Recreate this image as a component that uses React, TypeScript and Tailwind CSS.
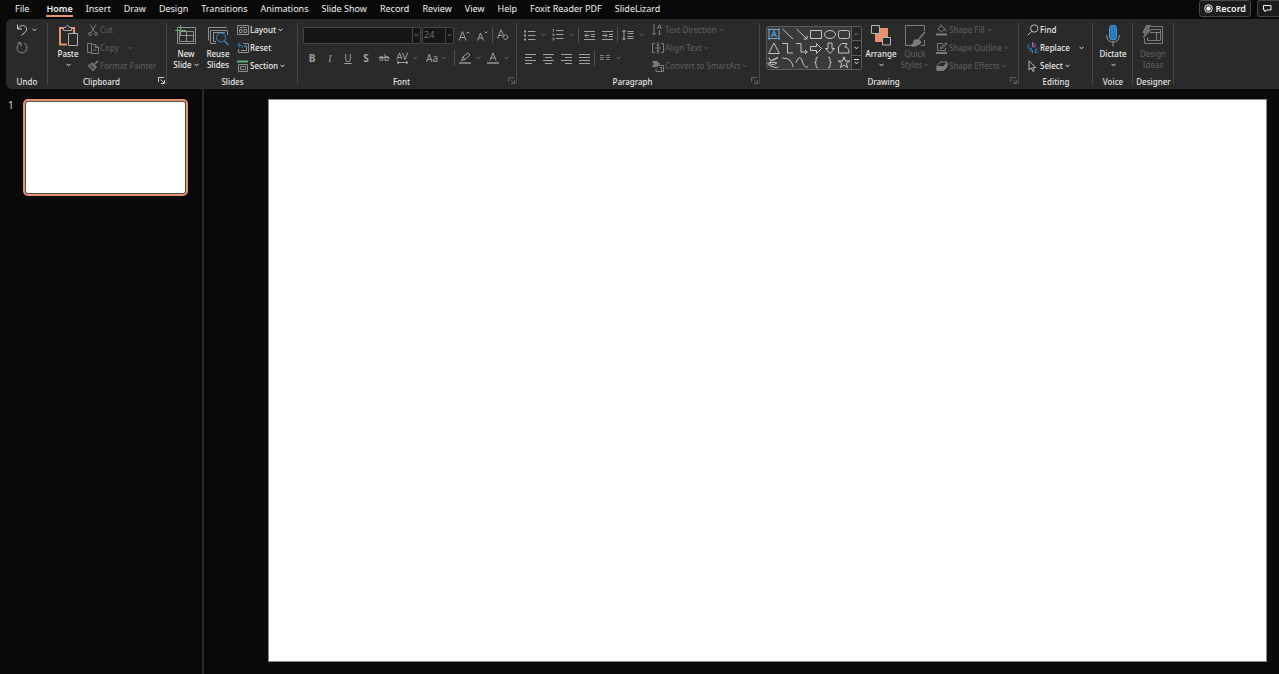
import React, { useState } from 'react';

interface IconProps {
  w?: number;
  h?: number;
  className?: string;
  children: React.ReactNode;
}

const Icon: React.FC<IconProps> = ({ w = 12, h = 12, className = '', children }) => (
  <svg
    width={w}
    height={h}
    viewBox={`0 0 ${w} ${h}`}
    fill="none"
    stroke="currentColor"
    className={`shrink-0 ${className}`}
    aria-hidden="true"
  >
    {children}
  </svg>
);

const Chevron = () => (
  <Icon w={5} h={4}>
    <path d="M0.5 0.8 2.5 2.8 4.5 0.8" />
  </Icon>
);

const Divider = () => <span className="w-px h-4 mx-px shrink-0 bg-[#505050]" />;

const Launcher: React.FC<{ label: string; disabled?: boolean }> = ({ label, disabled }) => (
  <button
    aria-label={`${label} settings`}
    className={`absolute right-0.5 bottom-1 ${disabled ? 'text-[#606060]' : 'text-[#c8c8c8]'}`}
  >
    <Icon w={7} h={7}>
      <path d="M0.5 5V0.5H6M2.5 2.5 6 6M6.5 3V6.5H3" />
    </Icon>
  </button>
);

interface GroupProps {
  label: string;
  width: string;
  launcher?: 'on' | 'off';
  children: React.ReactNode;
}

const Group: React.FC<GroupProps> = ({ label, width, launcher, children }) => (
  <section aria-label={label} className={`relative shrink-0 pt-0.5 ${width}`}>
    <div className="flex h-[54px]">{children}</div>
    <div
      className={`h-[13px] leading-[13px] text-center font-medium text-[#e4e4e4] ${launcher ? 'pr-3' : ''}`}
    >
      {label}
    </div>
    {launcher && <Launcher label={label} disabled={launcher === 'off'} />}
    <span className="absolute right-0 top-1 bottom-1 w-px bg-[#484848]" />
  </section>
);

interface BigButtonProps {
  icon: React.ReactNode;
  lines: string[];
  disabled?: boolean;
  menu?: boolean;
}

const BigButton: React.FC<BigButtonProps> = ({ icon, lines, disabled, menu }) => (
  <button
    className={`flex flex-col items-center shrink-0 w-8 pt-1 leading-[11px] whitespace-nowrap ${
      disabled ? 'text-[#606060]' : 'font-medium text-[#ececec]'
    }`}
  >
    <span className="h-[23px]">{icon}</span>
    <span>{lines[0]}</span>
    <span className="flex items-center justify-center gap-0.5 h-[11px]">
      {lines[1]}
      {menu && <Chevron />}
    </span>
  </button>
);

interface RowButtonProps {
  icon: React.ReactNode;
  label: string;
  disabled?: boolean;
  menu?: boolean;
  wide?: boolean;
}

const RowButton: React.FC<RowButtonProps> = ({ icon, label, disabled, menu, wide }) => (
  <button
    className={`flex items-center h-[18px] gap-px whitespace-nowrap ${
      disabled ? 'text-[#606060]' : 'font-medium text-[#ececec]'
    }`}
  >
    <span className={disabled ? 'text-[#7c7c7c]' : 'text-[#b8b8b8]'}>{icon}</span>
    <span>{label}</span>
    {menu && (
      <span className={wide ? 'pl-2' : 'pl-px'}>
        <Chevron />
      </span>
    )}
  </button>
);

const ToolButton: React.FC<{ label: string; menu?: boolean; children: React.ReactNode }> = ({
  label,
  menu,
  children,
}) => (
  <button
    aria-label={label}
    className={`flex items-center h-[22px] shrink-0 text-[#a0a0a0] ${menu ? 'w-7' : 'w-[18px]'}`}
  >
    <span className="flex justify-center w-[18px]">{children}</span>
    {menu && (
      <span className="flex justify-center w-2 text-[#6c6c6c]">
        <Chevron />
      </span>
    )}
  </button>
);

const lineIcon = (rows: number[][]) => (
  <Icon w={11} h={11}>
    {rows.map(([x1, x2], i) => (
      <path key={i} d={`M${x1} ${1.5 + i * 3}H${x2}`} />
    ))}
  </Icon>
);

const tabs = [
  'File',
  'Home',
  'Insert',
  'Draw',
  'Design',
  'Transitions',
  'Animations',
  'Slide Show',
  'Record',
  'Review',
  'View',
  'Help',
  'Foxit Reader PDF',
  'SlideLizard',
];

const shapes: { name: string; art: React.ReactNode }[] = [
  {
    name: 'Text box',
    art: (
      <>
        <path d="M2 2.5H12V11.5H2Z" stroke="#9aa4ac" />
        <path d="M4.5 10 7 4 9.5 10M5.5 8H8.5" stroke="#3d9be0" strokeWidth="1.3" />
        <path d="M1 2.5H3M11 2.5H13M1 11.5H3M11 11.5H13" stroke="#3d9be0" strokeWidth="2" />
      </>
    ),
  },
  { name: 'Line', art: <path d="M1.5 2 12 12" /> },
  { name: 'Arrow', art: <path d="M1.5 2 12 12M12 8.5V12H8.5" /> },
  { name: 'Rectangle', art: <path d="M1.5 3.5H12.5V11.5H1.5Z" /> },
  { name: 'Oval', art: <ellipse cx="7" cy="7.5" rx="5.5" ry="4" /> },
  { name: 'Rounded rectangle', art: <rect x="1.5" y="3.5" width="11" height="8" rx="2" /> },
  { name: 'Triangle', art: <path d="M7 2 12.3 12.5H1.7Z" /> },
  { name: 'Elbow connector', art: <path d="M1 2.5H6.5V12H12" /> },
  { name: 'Elbow arrow connector', art: <path d="M1 2.5H6V11H12M10 9 12.3 11 10 13" /> },
  { name: 'Right arrow', art: <path d="M1.5 5.5H7.5V2.5L12.5 7.5 7.5 12.5V9.5H1.5Z" /> },
  { name: 'Down arrow', art: <path d="M5 2V7.5H2.5L7 12.5 11.5 7.5H9V2Z" /> },
  { name: 'Freeform', art: <path d="M1.5 6 4.5 2.5H10L8 6Q12 6 12 12H1.5Z" /> },
  { name: 'Scribble', art: <path d="M2 2.5Q2 6 5 5.5T11 2.5Q3 5 3 8T8 9 5 7.5 4 11 11.5 11.5" /> },
  { name: 'Arc', art: <path d="M1.5 3Q11 3 12 12" /> },
  { name: 'Curve', art: <path d="M1 7.5C4 0 6 2 7.5 7S10 12 13 12" /> },
  { name: 'Left brace', art: <path d="M9 2Q7 2 7 4V6Q7 7.5 5.5 7.5 7 7.5 7 9V11Q7 13 9 13" /> },
  { name: 'Right brace', art: <path d="M5 2Q7 2 7 4V6Q7 7.5 8.5 7.5 7 7.5 7 9V11Q7 13 5 13" /> },
  { name: 'Star', art: <path d="M7 1.8 8.4 6H12.7L9.3 8.4 10.6 12.6 7 10 3.4 12.6 4.7 8.4 1.3 6H5.6Z" /> },
];

const TopBar = () => {
  const [active, setActive] = useState('Home');

  return (
    <header className="flex items-start justify-between h-[19px] text-[9px] leading-4 text-[#f0f0f0]">
      <nav className="flex gap-[13px] pl-[15px] whitespace-nowrap">
        {tabs.map((tab) => (
          <button
            key={tab}
            onClick={() => setActive(tab)}
            className={`h-[17px] border-b-2 leading-[17px] first:mr-1 ${
              tab === active ? 'border-[#e8926c] font-semibold' : 'border-transparent'
            }`}
          >
            {tab}
          </button>
        ))}
      </nav>
      <div className="flex gap-1.5">
        <button className="flex items-center gap-[3px] h-[17px] px-1 rounded-[3px] border border-[#484848] bg-[#1c1c1c] font-semibold">
          <Icon w={9} h={9}>
            <circle cx="4.5" cy="4.5" r="3.8" />
            <circle cx="4.5" cy="4.5" r="2.3" fill="currentColor" stroke="none" />
          </Icon>
          Record
        </button>
        <button
          aria-label="Comments"
          className="flex items-center h-[17px] w-[22px] pl-1 rounded-l-[3px] border border-r-0 border-[#484848] bg-[#1c1c1c]"
        >
          <Icon w={10} h={9}>
            <path d="M1.5 1.5H9V6H4.5L3 7.8V6H1.5Z" />
          </Icon>
        </button>
      </div>
    </header>
  );
};

const UndoGroup = () => (
  <Group label="Undo" width="w-[42px]">
    <div className="flex flex-col pl-2.5">
      <button aria-label="Undo" className="flex items-center gap-1 h-[18px] text-[#d0d0d0]">
        <Icon>
          <path d="M1.5 0.5V5H6M1.8 4.7C4 1.5 7 0.7 9.2 2.5 11.5 4.5 10.5 7 9 8.2L5.5 11.5" />
        </Icon>
        <Chevron />
      </button>
      <button aria-label="Redo" className="flex items-center h-[18px] text-[#8a8a8a]">
        <Icon>
          <path d="M1.5 .8H5V4.3M4.8 1A5 5 0 1 0 8 1.3" />
        </Icon>
      </button>
    </div>
  </Group>
);

const ClipboardGroup = () => (
  <Group label="Clipboard" width="w-[119px]" launcher="on">
    <div className="flex gap-[3px] pl-1">
      <BigButton
        menu
        lines={['Paste', '']}
        icon={
          <Icon w={20} h={22}>
            <path d="M7 3H2V19.5H9" stroke="#e8926c" strokeWidth="2" />
            <path d="M13 3H16V8" stroke="#e8926c" strokeWidth="2" />
            <path d="M5.5 5.5V2.5H7.5Q8 .5 9.5 .5T11.5 2.5H13.5V5.5Z" stroke="#a8a8a8" fill="#2a2a2a" />
            <path d="M10.5 8.5H19.5V20.5H10.5Z" stroke="#b0b0b0" fill="#2a2a2a" />
          </Icon>
        }
      />
      <div className="flex flex-col">
        <RowButton
          disabled
          label="Cut"
          icon={
            <Icon>
              <path d="M3 .5 8 8.5M9 .5 4 8.5" />
              <circle cx="3" cy="9.8" r="1.5" />
              <circle cx="9" cy="9.8" r="1.5" />
            </Icon>
          }
        />
        <RowButton
          disabled
          menu
          wide
          label="Copy"
          icon={
            <Icon>
              <path d="M4 10.5H.5V1.5H5" />
              <path d="M4.5 2.5H8.5L11.5 5.5V11.5H4.5ZM8.5 2.5V5.5H11.5M6.5 8H9.5" />
            </Icon>
          }
        />
        <RowButton
          disabled
          label="Format Painter"
          icon={
            <Icon>
              <path d="M11 .8 8 4M5 3 9.5 7.5" strokeWidth="1.6" />
              <path d="M4.5 3.5 1 5.5 6 11 9 7.8Z" fill="currentColor" fillOpacity=".5" />
            </Icon>
          }
        />
      </div>
    </div>
  </Group>
);

const SlidesGroup = () => (
  <Group label="Slides" width="w-[131px]">
    <div className="flex pl-[3px]">
      <BigButton
        menu
        lines={['New', 'Slide']}
        icon={
          <Icon w={22} h={22} className="text-[#909090]">
            <path d="M2.5 2.5H20.5V18.5H2.5Z" />
            <path d="M4.5 6.5H18.5V16.5H4.5ZM11.5 6.5V16.5M4.5 10.5H18.5" />
            <path d="M5.5 0V11M0 5.5H11" stroke="#5fb070" />
          </Icon>
        }
      />
      <BigButton
        lines={['Reuse', 'Slides']}
        icon={
          <Icon w={22} h={22} className="text-[#909090]">
            <path d="M1.5 15.5V2.5H19.5M9 18.5H3.5V5.5H20.5V10M6 7.5H18M6.5 7.5V16.5H9" />
            <circle cx="14" cy="12.5" r="4.5" stroke="#2f86c8" />
            <path d="M17.3 15.8 21.5 20" stroke="#2f86c8" strokeWidth="1.4" />
          </Icon>
        }
      />
      <div className="flex flex-col pl-[3px]">
        <RowButton
          menu
          label="Layout"
          icon={
            <Icon className="text-[#909090]">
              <path d="M.5 1.5H11.5V10.5H.5ZM2.5 3.5H9.5M2.5 5.5H5V8.5H2.5ZM7 5.5H9.5V8.5H7Z" />
            </Icon>
          }
        />
        <RowButton
          label="Reset"
          icon={
            <Icon className="text-[#909090]">
              <path d="M6 1.5H11.5V10.5H1.5V7M7 4H9.5V8.5H4" />
              <path d="M3 .8 .8 3 3 5.2M1 3H3Q5.5 3 5.5 6" stroke="#2f86c8" />
            </Icon>
          }
        />
        <RowButton
          menu
          label="Section"
          icon={
            <Icon className="text-[#909090]">
              <path d="M0 1.5H11" stroke="#5fb070" strokeWidth="2" />
              <path d="M1.5 4.5H10.5V11.5H1.5ZM3.5 6.5H8.5V9.5H3.5Z" />
            </Icon>
          }
        />
      </div>
    </div>
  </Group>
);

const FontGroup = () => (
  <Group label="Font" width="w-[219px]" launcher="off">
    <div className="flex flex-col gap-px pt-[3px] pl-[5px]">
      <div className="flex items-center h-[22px] gap-px">
        <div className="flex h-[17px] w-[118px] rounded-[2px] border border-[#454545] bg-[#161616]">
          <input aria-label="Font name" className="min-w-0 flex-1 bg-transparent px-1 text-[#707070]" />
          <button aria-label="Font list" className="flex items-center justify-center w-2 border-l border-[#454545] text-[#707070]">
            <Chevron />
          </button>
        </div>
        <div className="flex h-[17px] w-8 rounded-[2px] border border-[#454545] bg-[#161616]">
          <input
            aria-label="Font size"
            defaultValue="24"
            className="min-w-0 flex-1 bg-transparent pl-px text-[9px] text-[#707070]"
          />
          <button aria-label="Font size list" className="flex items-center justify-center w-2 border-l border-[#454545] text-[#707070]">
            <Chevron />
          </button>
        </div>
        <div className="flex items-center">
          <ToolButton label="Increase font size">
            <Icon w={12} h={11}>
              <path d="M1 10.5 4.5 1.5 8 10.5M2.2 7.5H6.8M8.5 3.5 10 2 11.5 3.5" />
            </Icon>
          </ToolButton>
          <ToolButton label="Decrease font size">
            <Icon w={12} h={11}>
              <path d="M1.5 10.5 4.5 3 7.5 10.5M2.5 8H6.5M8.5 1.5 10 3 11.5 1.5" />
            </Icon>
          </ToolButton>
          <Divider />
          <ToolButton label="Clear formatting">
            <Icon w={12} h={12}>
              <path d="M.5 9.5 4 .8 6.5 6.5M1.8 6.5H5.5M8.5 5.5 11.3 8 8.5 11 5.8 8.3Z" />
            </Icon>
          </ToolButton>
        </div>
      </div>
      <div className="flex items-center h-[22px] text-[10px]">
        <ToolButton label="Bold"><b>B</b></ToolButton>
        <ToolButton label="Italic"><i className="font-['Liberation_Serif',serif]">I</i></ToolButton>
        <ToolButton label="Underline"><u>U</u></ToolButton>
        <ToolButton label="Shadow"><b>S</b></ToolButton>
        <ToolButton label="Strikethrough"><s className="text-[9px]">ab</s></ToolButton>
        <ToolButton label="Character spacing" menu>
          <Icon w={13} h={12}>
            <path d="M.8 7.5 3.5 .8 6 7.5M1.8 5.5H5.2M6.5 .8 9 7.5 11.7 .8" />
            <path d="M1 10.5H12M3 8.8 1 10.5 3 12M10 8.8 12 10.5 10 12" />
          </Icon>
        </ToolButton>
        <ToolButton label="Change case" menu>
          <span className="pl-1">Aa</span>
        </ToolButton>
        <span className="w-1" />
        <Divider />
        <ToolButton label="Highlight colour" menu>
          <Icon w={12} h={12}>
            <path d="M0 11H12" stroke="#787878" strokeWidth="2" />
            <path d="M2.5 8.5 4 5 9 .8 11 3 6 7.5ZM4 5 6 7.5" />
          </Icon>
        </ToolButton>
        <ToolButton label="Font colour" menu>
          <Icon w={12} h={12}>
            <path d="M0 11H12" stroke="#787878" strokeWidth="2" />
            <path d="M3 8.5 6 .8 9 8.5M4 6H8" />
          </Icon>
        </ToolButton>
      </div>
    </div>
  </Group>
);

const ParagraphGroup = () => (
  <Group label="Paragraph" width="w-[243px]" launcher="off">
    <div className="flex flex-col gap-px pt-[3px] pl-1 w-[135px] shrink-0">
      <div className="flex items-center h-[22px]">
        <ToolButton label="Bullets" menu>
          <Icon w={12} h={11}>
            <path d="M0 1.5H2M0 5.5H2M0 9.5H2" strokeWidth="2" />
            <path d="M4 1.5H11.5M4 5.5H11.5M4 9.5H11.5" />
          </Icon>
        </ToolButton>
        <ToolButton label="Numbering" menu>
          <Icon w={12} h={12}>
            <path d="M.5 .5H1.5V3M.3 5H2V6.5H.5M.3 9H2V11H.5" strokeWidth=".8" />
            <path d="M4 1.5H11.5M4 5.5H11.5M4 9.5H11.5" />
          </Icon>
        </ToolButton>
        <Divider />
        <ToolButton label="Decrease indent">
          <Icon w={11} h={11}>
            <path d="M0 1.5H11M7 4.5H11M7 6.5H11M0 9.5H11M5.5 5.5H1M3 3.5 1 5.5 3 7.5" />
          </Icon>
        </ToolButton>
        <ToolButton label="Increase indent">
          <Icon w={11} h={11}>
            <path d="M0 1.5H11M7 4.5H11M7 6.5H11M0 9.5H11M0 5.5H5M3 3.5 5 5.5 3 7.5" />
          </Icon>
        </ToolButton>
        <Divider />
        <ToolButton label="Line spacing" menu>
          <Icon w={12} h={12}>
            <path d="M2 1V11M.3 3 2 1 3.7 3M.3 9 2 11 3.7 9" />
            <path d="M5.5 2.5H11.5M5.5 4.5H11.5M5.5 7.5H11.5M5.5 9.5H11.5" />
          </Icon>
        </ToolButton>
      </div>
      <div className="flex items-center h-[22px]">
        <ToolButton label="Align left">{lineIcon([[0, 11], [0, 7], [0, 11], [0, 7]])}</ToolButton>
        <ToolButton label="Center">{lineIcon([[0, 11], [2, 9], [0, 11], [2, 9]])}</ToolButton>
        <ToolButton label="Align right">{lineIcon([[0, 11], [4, 11], [0, 11], [4, 11]])}</ToolButton>
        <ToolButton label="Justify">{lineIcon([[0, 11], [0, 11], [0, 11], [0, 11]])}</ToolButton>
        <Divider />
        <ToolButton label="Columns" menu>
          <Icon w={10} h={8} className="text-[#7c7c7c]">
            <path d="M0 1.5H4M0 3.5H4M0 5.5H4M6 1.5H10M6 3.5H10M6 5.5H10" />
          </Icon>
        </ToolButton>
      </div>
    </div>
    <div className="flex flex-col">
      <RowButton
        disabled
        menu
        label="Text Direction"
        icon={
          <Icon>
            <path d="M2 0V11M.3 9 2 11 3.7 9M5.5 5 7.5 .5 9.5 5M6.3 3.5H8.7M7.5 6V11M6 9.5 7.5 11 9 9.5" />
          </Icon>
        }
      />
      <RowButton
        disabled
        menu
        label="Align Text"
        icon={
          <Icon>
            <path d="M3 1.5H.5V10.5H3M9 1.5H11.5V10.5H9M6 0V12M3 6H9M4.5 2.5 6 4 7.5 2.5M4.5 9.5 6 8 7.5 9.5" />
          </Icon>
        }
      />
      <RowButton
        disabled
        menu
        label="Convert to SmartArt"
        icon={
          <Icon>
            <path d="M.5 1.5H5L7.5 4 5 6.5H.5L2.5 4Z" fill="currentColor" />
            <path d="M5.5 5.5H11.5V11.5H4V8.5M7.5 7.5H9.5V11" />
          </Icon>
        }
      />
    </div>
  </Group>
);

const ShapeGallery = () => (
  <div className="flex h-11 mt-[5px] ml-1.5 rounded-[3px] border border-[#5c5c5c] bg-[#3a3a3a] overflow-hidden shrink-0">
    <div className="grid grid-cols-6 text-[#c4c4c4]">
      {shapes.map((shape) => (
        <button key={shape.name} aria-label={shape.name} className="w-3.5 h-3.5">
          <Icon w={14} h={14}>
            {shape.art}
          </Icon>
        </button>
      ))}
    </div>
    <div className="flex flex-col w-2.5 border-l border-[#5c5c5c] bg-[#262626] divide-y divide-[#5c5c5c]">
      <button aria-label="Previous shapes" className="flex flex-1 items-center justify-center text-[#6c6c6c]">
        <Icon w={5} h={4}>
          <path d="M.5 3 2.5 1 4.5 3" />
        </Icon>
      </button>
      <button aria-label="Next shapes" className="flex flex-1 items-center justify-center text-[#e4e4e4]">
        <Chevron />
      </button>
      <button aria-label="More shapes" className="flex flex-1 items-center justify-center text-[#e4e4e4]">
        <Icon w={5} h={6}>
          <path d="M0 .5H5M.5 2.8 2.5 4.8 4.5 2.8" />
        </Icon>
      </button>
    </div>
  </div>
);

const DrawingGroup = () => (
  <Group label="Drawing" width="w-[259px]" launcher="off">
    <ShapeGallery />
    <div className="flex gap-0.5 pl-[3px]">
      <BigButton
        menu
        lines={['Arrange', '']}
        icon={
          <Icon w={20} h={21}>
            <path d="M4 3H17V17H4Z" fill="#e8926c" stroke="none" />
            <path d="M.5 .5H8.5V8.5H.5ZM11.5 12.5H19.5V20H11.5Z" fill="#2a2a2a" stroke="#b4b4b4" />
          </Icon>
        }
      />
      <BigButton
        disabled
        menu
        lines={['Quick', 'Styles']}
        icon={
          <Icon w={22} h={22} className="text-[#7c7c7c]">
            <path d="M9 20.5H1.5V.5H20.5V6M20.5 15V20.5H17" />
            <path d="M21 7 14 15M7 20.5Q10 20 10 17T14.5 15.5 14 19.5 7 20.5Z" fill="#7c7c7c" strokeWidth="1.5" />
          </Icon>
        }
      />
      <div className="flex flex-col pl-[3px]">
        <RowButton
          disabled
          menu
          label="Shape Fill"
          icon={
            <Icon>
              <path d="M0 10.5H11" strokeWidth="2" />
              <path d="M5 1.5 9 5 5.5 8 2 5ZM5 .3V3M9.8 5.5V7.5" />
            </Icon>
          }
        />
        <RowButton
          disabled
          menu
          label="Shape Outline"
          icon={
            <Icon>
              <path d="M0 11H11" strokeWidth="2" />
              <path d="M7 1.5H1.5V8.5H9.5V6M4.5 6.5 5 5 10 .8 11 2 6 6.3Z" />
            </Icon>
          }
        />
        <RowButton
          disabled
          menu
          label="Shape Effects"
          icon={
            <Icon>
              <path d="M1 6 4 2H11V6L8 10H1Z" />
              <path d="M1 6.5H7.5V10.5H1ZM8 6 11 2.5V6L8 10Z" fill="currentColor" />
            </Icon>
          }
        />
      </div>
    </div>
  </Group>
);

const EditingGroup = () => (
  <Group label="Editing" width="w-[74px]">
    <div className="flex flex-col pl-2">
      <RowButton
        label="Find"
        icon={
          <Icon>
            <circle cx="7.3" cy="4.5" r="3.7" />
            <path d="M4.7 7.3 .7 11.3" />
          </Icon>
        }
      />
      <RowButton
        menu
        wide
        label="Replace"
        icon={
          <Icon>
            <path d="M5.5 0V5M5.5 3Q5.5 2 7 2T8.5 3.5 7 5 5.5 3.5" stroke="#b05cc0" />
            <path d="M2.5 2.5Q.5 3 .8 5T4.5 7M3 5.5 4.7 7 3 8.7M5.5 8V11M10.8 7.3H8.5V10.5H10.8M3 9.5Q4.5 8 5.5 9.5" stroke="#2f86c8" />
          </Icon>
        }
      />
      <RowButton
        menu
        label="Select"
        icon={
          <Icon>
            <path d="M2 .8V10L4.3 8 6 11.5 7.3 10.8 5.8 7.5H8.8Z" />
          </Icon>
        }
      />
    </div>
  </Group>
);

const VoiceGroup = () => (
  <Group label="Voice" width="w-10">
    <div className="flex pl-1">
      <BigButton
        menu
        lines={['Dictate', '']}
        icon={
          <Icon w={14} h={22}>
            <rect x="3.5" y="0" width="7" height="15" rx="3.5" fill="#2a78b8" stroke="#4a98d4" />
            <path d="M.7 10Q.7 17 7 17T13.3 10M7 17V21.5" stroke="#9a9a9a" />
          </Icon>
        }
      />
    </div>
  </Group>
);

const DesignerGroup = () => (
  <Group label="Designer" width="w-[41px]">
    <div className="flex pl-1">
      <BigButton
        disabled
        lines={['Design', 'Ideas']}
        icon={
          <Icon w={22} h={20} className="text-[#7c7c7c]">
            <path d="M9 1.5H20.5V18.5H2.5V13M9 4.5H18.5M8 7.5H18.5V15.5H5.5V12.5M14.5 7.5V15.5M18.5 4.5V7.5" />
            <path d="M4.5 .5H8.5L6 5H8.5L1.5 12.5 3.5 7.5H1Z" fill="#6c6c6c" />
          </Icon>
        }
      />
    </div>
  </Group>
);

const App = () => (
  <div className="flex flex-col min-h-screen overflow-hidden bg-[#090909] font-['Noto_Sans','Open_Sans',sans-serif] text-[8px]">
    <TopBar />
    <div className="flex ml-1.5 rounded-l-md border-b border-[#2e2e2e] bg-[#2a2a2a]">
      <UndoGroup />
      <ClipboardGroup />
      <SlidesGroup />
      <FontGroup />
      <ParagraphGroup />
      <DrawingGroup />
      <EditingGroup />
      <VoiceGroup />
      <DesignerGroup />
    </div>
    <div className="flex flex-1">
      <aside className="flex items-start gap-[9px] w-[204px] shrink-0 pt-2.5 pl-2 pr-3.5 border-r-2 border-[#2a2a2a]">
        <span className="w-1.5 text-[10px] leading-3 text-[#d8d8d8]">1</span>
        <button aria-label="Slide 1" className="flex-1 h-[97px] rounded-[5px] border-2 border-[#e8926c] bg-[#505050] p-px">
          <span className="block h-full rounded-[2px] bg-white" />
        </button>
      </aside>
      <main className="flex-1 pt-2.5 pl-16 pr-3 pb-3">
        <div className="aspect-[998/562] border border-[#8a8a8a] bg-white" />
      </main>
    </div>
  </div>
);

export default App;
